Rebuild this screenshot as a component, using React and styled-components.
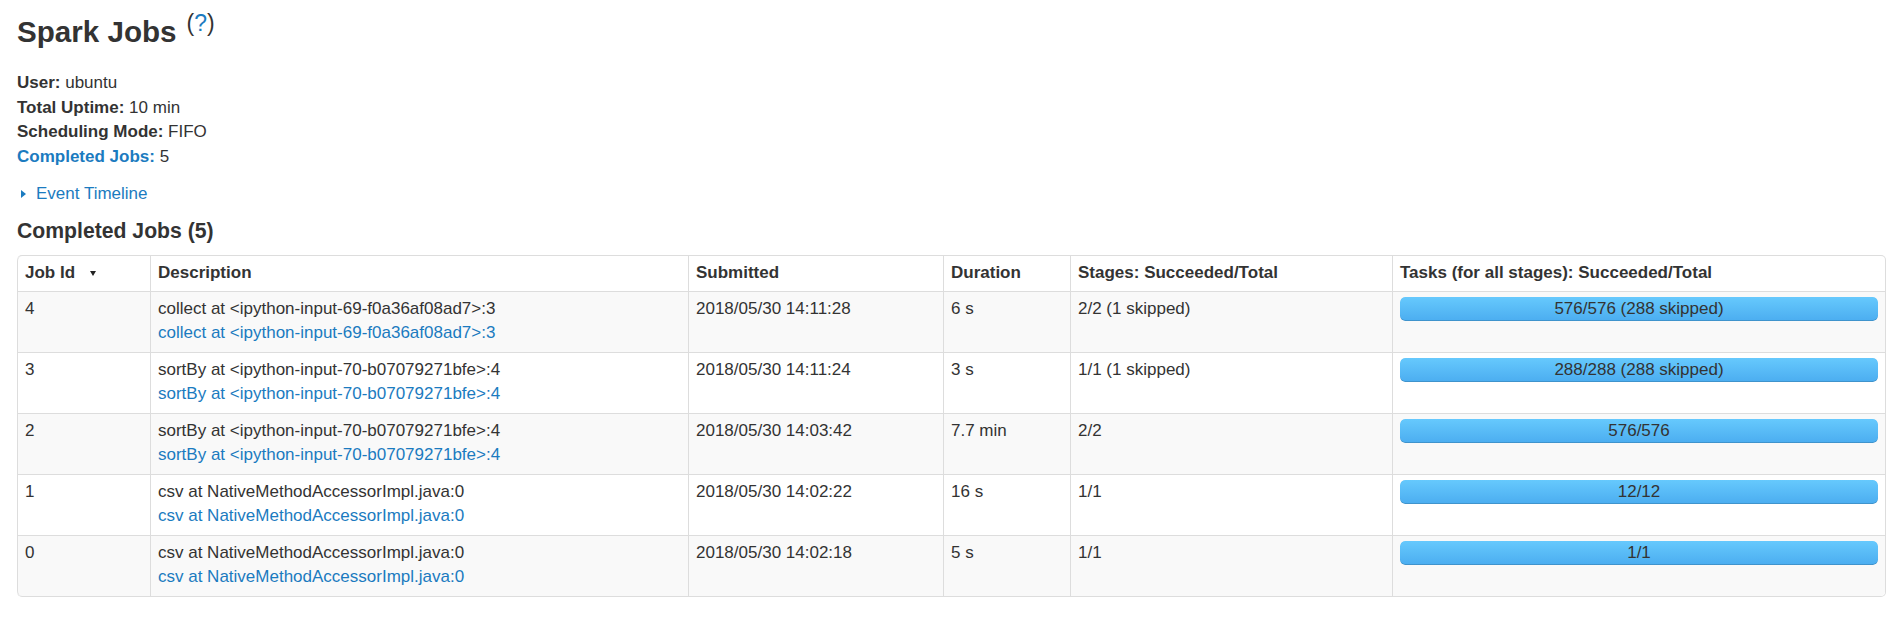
import React from "react";
import styled, { createGlobalStyle } from "styled-components";

const jobs = [
  {
    id: 4,
    desc: "collect at <ipython-input-69-f0a36af08ad7>:3",
    submitted: "2018/05/30 14:11:28",
    duration: "6 s",
    stages: "2/2 (1 skipped)",
    tasks: "576/576 (288 skipped)",
  },
  {
    id: 3,
    desc: "sortBy at <ipython-input-70-b07079271bfe>:4",
    submitted: "2018/05/30 14:11:24",
    duration: "3 s",
    stages: "1/1 (1 skipped)",
    tasks: "288/288 (288 skipped)",
  },
  {
    id: 2,
    desc: "sortBy at <ipython-input-70-b07079271bfe>:4",
    submitted: "2018/05/30 14:03:42",
    duration: "7.7 min",
    stages: "2/2",
    tasks: "576/576",
  },
  {
    id: 1,
    desc: "csv at NativeMethodAccessorImpl.java:0",
    submitted: "2018/05/30 14:02:22",
    duration: "16 s",
    stages: "1/1",
    tasks: "12/12",
  },
  {
    id: 0,
    desc: "csv at NativeMethodAccessorImpl.java:0",
    submitted: "2018/05/30 14:02:18",
    duration: "5 s",
    stages: "1/1",
    tasks: "1/1",
  },
];

const columns = [
  { label: "Job Id", width: 133, sorted: true },
  { label: "Description", width: 538 },
  { label: "Submitted", width: 255 },
  { label: "Duration", width: 127 },
  { label: "Stages: Succeeded/Total", width: 322 },
  { label: "Tasks (for all stages): Succeeded/Total", width: 493 },
];

function App() {
  return (
    <>
      <GlobalStyle />
      <Page>
        <Title>
          Spark Jobs
          <Sup>
            (<Link href="#">?</Link>)
          </Sup>
        </Title>

        <InfoList>
          <li>
            <strong>User:</strong> ubuntu
          </li>
          <li>
            <strong>Total Uptime:</strong> 10 min
          </li>
          <li>
            <strong>Scheduling Mode:</strong> FIFO
          </li>
          <li>
            <Link href="#">
              <strong>Completed Jobs:</strong>
            </Link>{" "}
            5
          </li>
        </InfoList>

        <Timeline>
          <Arrow />
          <Link href="#">Event Timeline</Link>
        </Timeline>

        <SectionTitle>Completed Jobs (5)</SectionTitle>

        <JobTable>
          <colgroup>
            {columns.map((c) => (
              <Col key={c.label} $width={c.width} />
            ))}
          </colgroup>
          <thead>
            <tr>
              {columns.map((c) => (
                <HeadCell key={c.label}>
                  {c.label}
                  {c.sorted && <SortArrow />}
                </HeadCell>
              ))}
            </tr>
          </thead>
          <tbody>
            {jobs.map((job, i) => (
              <JobRow key={job.id} $striped={i % 2 === 0}>
                <Cell>{job.id}</Cell>
                <Cell>
                  <div>{job.desc}</div>
                  <Link href="#">{job.desc}</Link>
                </Cell>
                <Cell>{job.submitted}</Cell>
                <Cell>{job.duration}</Cell>
                <Cell>{job.stages}</Cell>
                <Cell>
                  <Progress>
                    <Bar $percent={100} />
                    <BarLabel>{job.tasks}</BarLabel>
                  </Progress>
                </Cell>
              </JobRow>
            ))}
          </tbody>
        </JobTable>
      </Page>
    </>
  );
}

const GlobalStyle = createGlobalStyle`
  body {
    margin: 0;
    background: #fff;
    color: #333;
    font-family: "Liberation Sans", Arial, sans-serif;
    font-size: 17px;
    line-height: 24.2px;
  }
`;

const Page = styled.div`
  padding: 0 12px 0 17px;
`;

const Link = styled.a`
  color: #1b7bc0;
  text-decoration: none;
`;

const Title = styled.h3`
  margin: 7.5px 0 15.2px;
  font-size: 29.6px;
  line-height: 48.4px;
  font-weight: bold;
  color: #333;
`;

const Sup = styled.sup`
  display: inline-block;
  margin-left: 10px;
  font-size: 23px;
  font-weight: normal;
  line-height: 1;
  vertical-align: top;
  transform: translateY(4px);
`;

const InfoList = styled.ul`
  list-style: none;
  margin: 0;
  padding: 0;
  line-height: 24.5px;

  strong {
    font-weight: bold;
  }
`;

const Timeline = styled.div`
  margin-top: 12.5px;
  display: flex;
  align-items: center;
  gap: 10px;
  padding-left: 4px;
`;

const Arrow = styled.span`
  width: 0;
  height: 0;
  border-top: 4.5px solid transparent;
  border-bottom: 4.5px solid transparent;
  border-left: 5px solid #1b7bc0;
`;

const SectionTitle = styled.h4`
  margin: 13px 0 12.3px;
  font-size: 21.2px;
  line-height: 24.2px;
  font-weight: bold;
  color: #333;
`;

const JobTable = styled.table`
  width: 100%;
  table-layout: fixed;
  border-collapse: separate;
  border-spacing: 0;
  border: 1px solid #ddd;
  border-left: 0;
  border-radius: 5px;
`;

const Col = styled.col`
  width: ${(p) => p.$width}px;
`;

const HeadCell = styled.th`
  text-align: left;
  font-weight: bold;
  padding: 5px 7px;
  line-height: 24.2px;
  border-left: 1px solid #ddd;
  white-space: nowrap;

  &:first-child {
    border-top-left-radius: 5px;
  }
`;

const SortArrow = styled.span`
  display: inline-block;
  margin-left: 15px;
  vertical-align: middle;
  width: 0;
  height: 0;
  border-top: 5px solid #222;
  border-left: 3px solid transparent;
  border-right: 3px solid transparent;
`;

const JobRow = styled.tr`
  background: ${(p) => (p.$striped ? "#f9f9f9" : "#fff")};

  &:last-child td:first-child {
    border-bottom-left-radius: 5px;
  }
  &:last-child td:last-child {
    border-bottom-right-radius: 5px;
  }
`;

const Cell = styled.td`
  vertical-align: top;
  padding: 5px 7px 6.2px;
  line-height: 24.4px;
  border-top: 1px solid #ddd;
  border-left: 1px solid #ddd;
  white-space: nowrap;
  overflow: hidden;
`;

const Progress = styled.div`
  position: relative;
  height: 24.2px;
  border-radius: 5px;
  background: #f5f5f5;
  overflow: hidden;
`;

const Bar = styled.div`
  width: ${(p) => p.$percent}%;
  height: 100%;
  background: linear-gradient(to bottom, #66c9fd, #4badf0);
  box-shadow: inset 0 -1px 0 rgba(0, 0, 0, 0.15);
  border-radius: 5px;
`;

const BarLabel = styled.span`
  position: absolute;
  left: 0;
  top: 0;
  width: 100%;
  text-align: center;
  line-height: 24.2px;
  color: #333;
`;

export default App;
